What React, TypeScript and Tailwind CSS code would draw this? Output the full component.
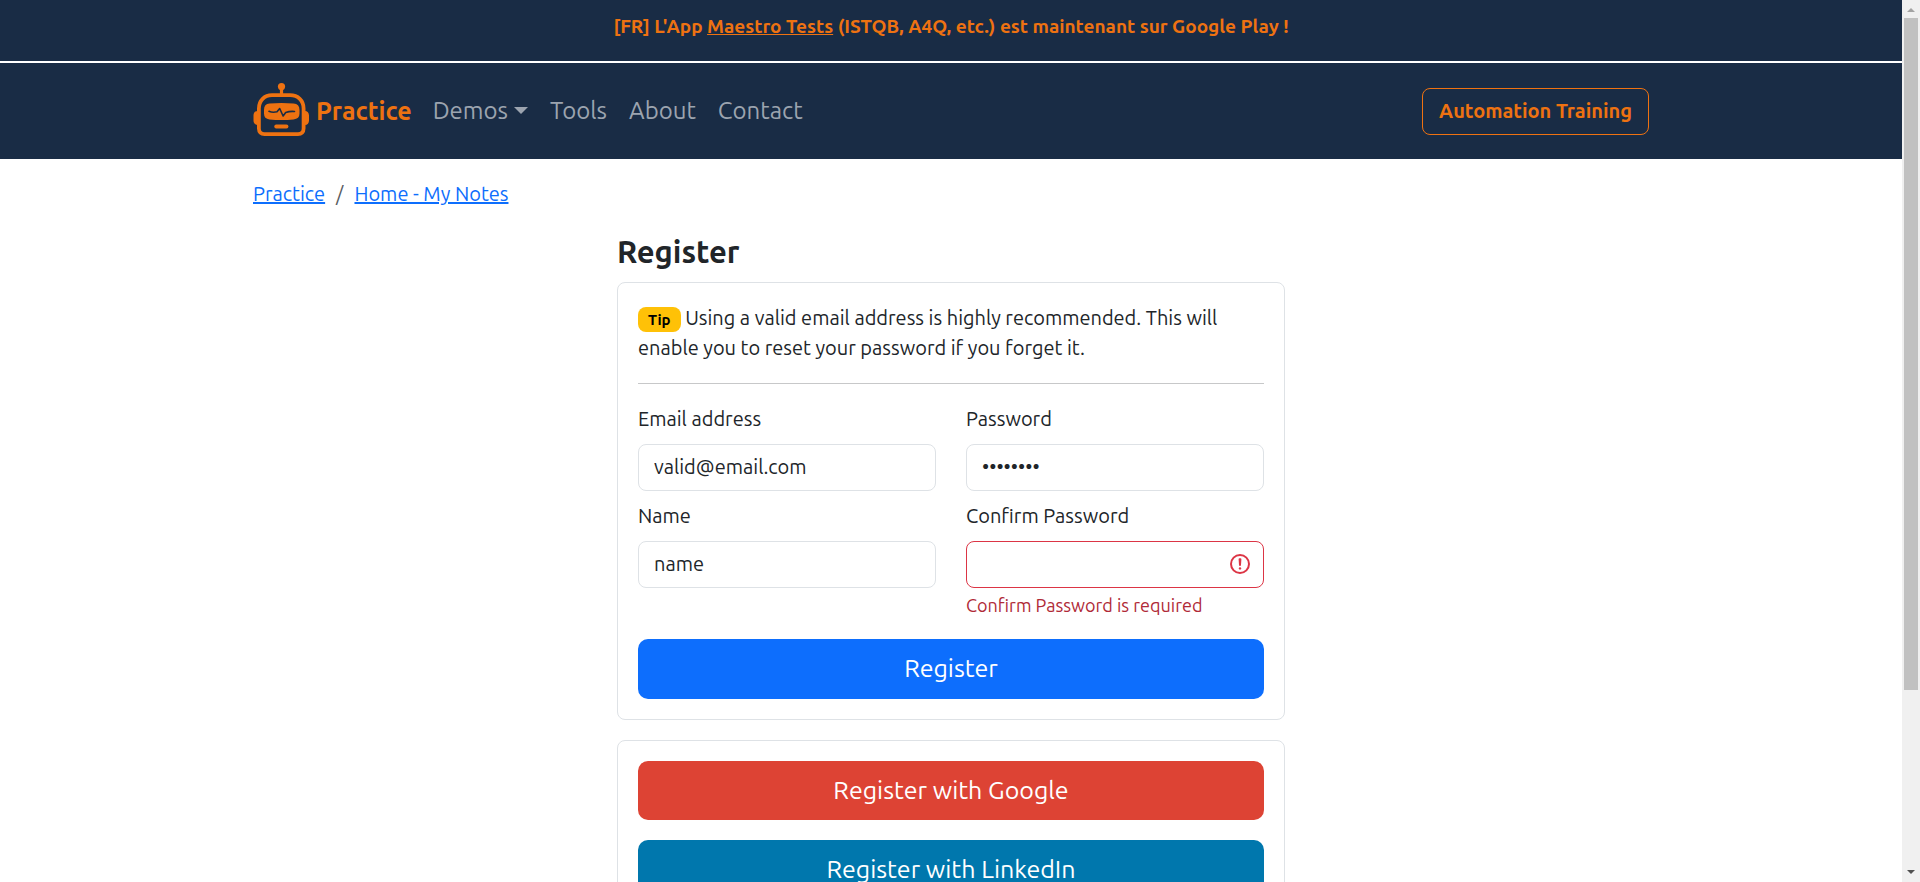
import type { ReactNode } from "react";

function RobotLogo() {
  return (
    <svg viewBox="0 0 56 54" className="mb-0.5 h-[54px] w-14 shrink-0" fill="none" stroke="currentColor" aria-hidden="true">
      <circle cx="28.500" cy="3.600" r="3.6" fill="currentColor" stroke="none" />
      <path d="M28.500 6v6" strokeWidth="3.2" />
      <path
        d="M19 12.200h18C45 12.200 50.600 17.500 50.600 25.500V45.500C50.600 49 48.500 51.200 45 51.200H11.500C8 51.200 5.900 49 5.900 45.500V25.500C5.900 17.500 11.500 12.200 19 12.200Z"
        strokeWidth="3.8"
      />
      <path d="M4.500 28C2 28 .5 29.800 .5 32.500V37.500C.5 40 2 42 4.500 42ZM52 28C54.500 28 56 29.800 56 32.500V37.500C56 40 54.500 42 52 42Z" fill="currentColor" stroke="none" />
      <path d="M16.500 20.600Q28.500 19.600 40.500 20.600Q46.500 21.100 46.500 27V30.500Q46.500 35.900 40.500 36.400Q28.500 37.500 16.500 36.400Q11 35.900 11 30.500V27Q11 21.100 16.500 20.600Z" fill="currentColor" stroke="none" />
      <path d="M16 28.300Q19.500 29.800 24 28.800L26.700 25.500L30.100 33L32.700 29.500Q37 28 41.500 28.500" className="stroke-[#192c45]" strokeWidth="1.600" strokeLinejoin="round" strokeLinecap="round" />
      <path d="M23.200 43.500H33.500" strokeWidth="3.800" strokeLinecap="round" />
    </svg>
  );
}

function NavLink({ children }: { children: ReactNode }) {
  return (
    <a href="#" className="flex items-center px-[11px] py-2.5 text-2xl leading-9 text-[#9ca4af]">
      {children}
    </a>
  );
}

type FieldProps = { id: string; label: string; type: string; value?: string; error?: string };

function Field({ id, label, type, value = "", error }: FieldProps) {
  return (
    <div>
      <label htmlFor={id} className="mb-2.5 block">
        {label}
      </label>
      <div className="relative">
        <input
          id={id}
          type={type}
          defaultValue={value}
          aria-invalid={error ? true : undefined}
          className={
            error
              ? "block h-[47px] w-full rounded-lg border border-[#dc3545] bg-white px-[15px] pb-0.5 outline-none"
              : "block h-[47px] w-full rounded-lg border border-[#dee2e6] bg-white px-[15px] pb-0.5 outline-none"
          }
        />
        {error && (
          <svg viewBox="0 0 12 12" className="absolute top-[11px] right-3 size-6 text-[#dc3545]" fill="none" stroke="currentColor" aria-hidden="true">
            <circle cx="6" cy="6" r="4.5" />
            <path strokeLinejoin="round" d="M5.800 3.600h.4L6 6.500z" />
            <circle cx="6" cy="8.200" r=".6" fill="currentColor" stroke="none" />
          </svg>
        )}
      </div>
      {error && <p className="mt-[3px] text-lg leading-7 text-[#b02a37]">{error}</p>}
    </div>
  );
}

function Card({ children }: { children: ReactNode }) {
  return <section className="mb-5 rounded-lg border border-[#dee2e6] p-5">{children}</section>;
}

function ScrollTrack() {
  return (
    <div className="flex w-[18px] shrink-0 flex-col items-center bg-[#f0f0f0]" aria-hidden="true">
      <svg viewBox="0 0 18 18" className="size-[18px]">
        <path d="M9 8l4 4H5z" fill="#a3a3a3" />
      </svg>
      <div className="w-3.5 grow-[672] basis-0 bg-[#c1c1c1]" />
      <div className="grow-[174] basis-0" />
      <svg viewBox="0 0 18 18" className="size-[18px]">
        <path d="M5 6h8l-4 4z" fill="#505050" />
      </svg>
    </div>
  );
}

export default function App() {
  return (
    <div className="flex h-screen overflow-hidden bg-white font-['Ubuntu','Noto_Sans',sans-serif] text-xl leading-[30px] text-[#212529]">
      <div className="min-w-0 flex-1 overflow-hidden">
        <p className="border-b-2 border-white bg-[#192c45] pt-3 pb-5 text-center text-[19px] leading-[29px] font-bold text-[#ee7211]">
          [FR] L'App{" "}
          <a href="#" className="underline">
            Maestro Tests
          </a>{" "}
          (ISTQB, A4Q, etc.) est maintenant sur Google Play !
        </p>
        <nav className="bg-[#192c45] px-3 py-5">
          <div className="mx-auto flex max-w-[1396px] items-center">
            <a href="#" className="mr-2.5 flex items-center gap-[7px] text-[25px] font-bold text-[#ee7211]">
              <RobotLogo />
              Practice
            </a>
            <NavLink>
              Demos
              <svg viewBox="0 0 14 8" className="ml-1.5 h-2 w-3.5" aria-hidden="true">
                <path d="M0 0h14L7 7z" fill="currentColor" />
              </svg>
            </NavLink>
            <NavLink>Tools</NavLink>
            <NavLink>About</NavLink>
            <NavLink>Contact</NavLink>
            <a href="#" className="ml-auto flex h-[47px] items-center rounded-lg border border-[#ee7211] px-4 font-bold text-[#ee7211]">
              Automation Training
            </a>
          </div>
        </nav>
        <div className="px-3">
          <div className="mx-auto max-w-[1396px] pt-5">
            <nav aria-label="Breadcrumb" className="mb-5 flex gap-[11px]">
              <a href="#" className="text-[#0d6efd] underline">
                Practice
              </a>
              <span className="text-[#585b5f]">/</span>
              <a href="#" className="text-[#0d6efd] underline">
                Home - My Notes
              </a>
            </nav>
            <main className="mx-auto max-w-[668px]">
              <h1 className="mb-2.5 pt-[3px] text-[31px] leading-10 font-semibold">Register</h1>
              <Card>
                <p>
                  <span className="inline-block rounded-lg bg-[#ffc107] px-2.5 py-[5px] align-middle text-[15px] leading-[15px] font-bold text-black">Tip</span> Using a valid email address is highly
                  recommended. This will enable you to reset your password if you forget it.
                </p>
                <hr className="my-5 border-t border-[#c7c8c9]" />
                <form>
                  <div className="grid grid-cols-2 gap-x-[30px] gap-y-2.5">
                    <Field id="email" label="Email address" type="text" value="valid@email.com" />
                    <Field id="password" label="Password" type="password" value="password" />
                    <Field id="name" label="Name" type="text" value="name" />
                    <Field id="confirm" label="Confirm Password" type="password" error="Confirm Password is required" />
                  </div>
                  <button type="button" className="mt-5 block h-[60px] w-full rounded-[10px] bg-[#0d6efd] pb-0.5 text-[25px] text-white">
                    Register
                  </button>
                </form>
              </Card>
              <Card>
                <a href="#" className="mb-5 flex h-[59px] items-center justify-center rounded-[10px] bg-[#dd4334] pb-0.5 text-[25px] text-white">
                  Register with Google
                </a>
                <a href="#" className="flex h-[59px] items-center justify-center rounded-[10px] bg-[#0077ad] pb-0.5 text-[25px] text-white">
                  Register with LinkedIn
                </a>
              </Card>
            </main>
          </div>
        </div>
      </div>
      <ScrollTrack />
    </div>
  );
}
